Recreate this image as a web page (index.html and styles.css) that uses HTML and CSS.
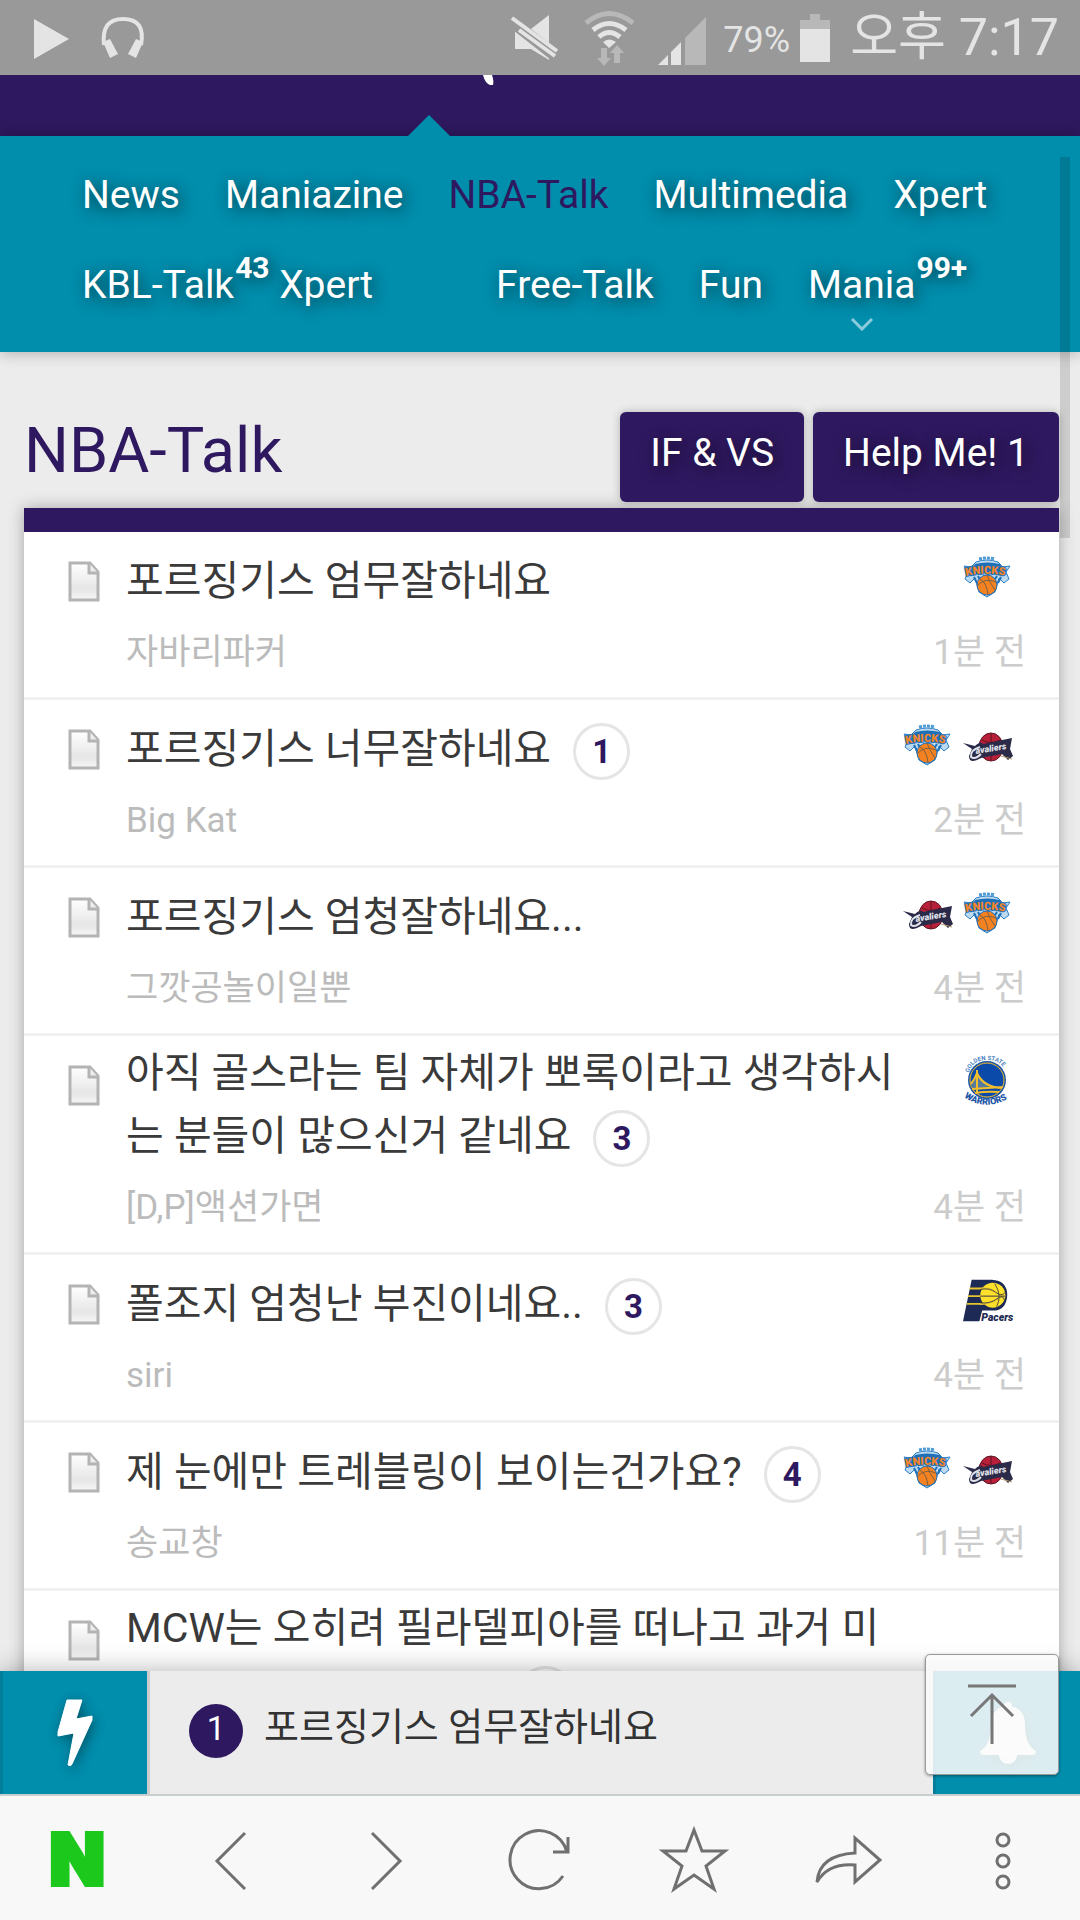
FILE: index.html
```html
<!DOCTYPE html>
<html lang="ko">

<head>
    <meta charset="UTF-8">
    <meta name="viewport" content="width=device-width, initial-scale=1.0">
    <title>NBA-Talk</title>
    <link rel="stylesheet" href="styles.css">
</head>

<body>
    <!-- shared icons -->
    <svg class="sprite" aria-hidden="true">
        <defs>
            <linearGradient id="paper" x1="0" y1="0" x2="0" y2="1">
                <stop offset="0" stop-color="#fff"/>
                <stop offset="0.7" stop-color="#e6e6e6"/>
                <stop offset="1" stop-color="#f6f6f6"/>
            </linearGradient>
            <path id="arc-top" d="M6 17 Q9 4 24 4 Q39 4 43 17"/>
            <path id="arc-bottom" d="M1 41 Q24 57 49 40"/>
            <path id="arc-knicks" d="M3 24 Q24 19 49 25"/>
        </defs>
        <symbol id="doc" viewBox="0 0 32 41">
            <path d="M2 2 H22 L30 11 V39 H2 Z" fill="url(#paper)" stroke="#b4b4b4" stroke-width="3"/>
            <path d="M21 2 V12 H30" fill="#eee" stroke="#b4b4b4" stroke-width="3"/>
        </symbol>
        <symbol id="knicks" viewBox="0 0 50 50">
            <path d="M1 14 L8 15 L13 10 Q24 6 35 10 L40 15 L47 14 L43 20 L46 27 L41 31 L36 26 L32 40 L24 45 L16 40 L12 26 L7 31 L2 27 L5 20 Z" fill="#bcd9ef" stroke="#2d7fc4" stroke-width="1"/>
            <path d="M16 7 Q24 5 32 7" fill="none" stroke="#4c9ad6" stroke-width="3" stroke-dasharray="3 1"/>
            <path d="M12 12 Q24 9 37 12 L43 23 Q24 18 5 24 Z" fill="#1d6fb8"/>
            <path d="M11 25 L14 31 M15 24 L18 30 M38 25 L35 31 M34 24 L30 30" stroke="#1d6fb8" stroke-width="2"/>
            <circle cx="24" cy="33" r="10" fill="#f58220" stroke="#1d6fb8" stroke-width="1"/>
            <path d="M17 27 Q24 31 25 43 M24 23 Q27 31 32 38 M14 34 Q22 25 33 30" fill="none" stroke="#7d6040" stroke-width="1"/>
        </symbol>
        <symbol id="cavs" viewBox="0 0 50 50">
            <ellipse cx="28" cy="27" rx="12" ry="14" fill="#b81f38" stroke="#5b1522" stroke-width="1"/>
            <path d="M28 13 V40 M19 20 Q28 25 37 20" fill="none" stroke="#5b1522" stroke-width="1"/>
            <path d="M0 23 L12 26 Q18 20 20 24 L49 18 L47 29 L50 36 L45 40 L39 34 L18 38 Q6 45 6 36 L9 29 Z" fill="#2b2a48"/>
            <path d="M17 27 Q7 30 8 37 Q12 40 18 34" fill="none" stroke="#e1e3ea" stroke-width="2"/>
            <path d="M38 36 L49 39" stroke="#b59a6a" stroke-width="1"/>
        </symbol>
    </svg>

    <div class="status-bar">
        <svg class="status-media" width="112" height="44" viewBox="0 0 112 44" fill="#e4e4e4">
            <path d="M0 3 L35 23 L0 43 Z"/>
            <path d="M70 29 Q67 3 89 3 Q112 3 107 29" fill="none" stroke="#e4e4e4" stroke-width="4"/>
            <path d="M69 26 L76 23 L84 38 L76 42 Z M109 26 L102 23 L94 38 L102 42 Z"/>
        </svg>
        <svg width="200" height="56" viewBox="0 0 200 56" fill="#e4e4e4">
            <path d="M4 22 H16 L38 5 V50 L20 39 H4 Z"/>
            <path d="M0 11 L46 47" stroke="#999" stroke-width="12"/>
            <path d="M1 8 L46 41 M8 20 L44 46" stroke="#e4e4e4" stroke-width="4"/>
            <g fill="none" stroke="#e4e4e4" stroke-width="5">
                <path d="M75 13 Q98 -6 122 13" stroke="#b8b8b8"/>
                <path d="M82 20 Q98 7 115 20"/>
                <path d="M88 27 Q98 18 109 27"/>
            </g>
            <path d="M92 32 Q98 27 105 32 L98 38 Z"/>
            <path d="M90 38 H96 V48 H100 L93 56 L86 48 H90 Z M103 53 V43 H99 L106 35 L113 43 H109 V53 Z" fill="#b8b8b8"/>
            <path d="M147 55 L157 45 V55 Z M160 55 V42 L170 32 V55 Z"/>
            <path d="M174 55 V28 L195 7 V55 Z" fill="#b8b8b8"/>
        </svg>
        <span class="battery-level">79%</span>
        <svg width="30" height="50" viewBox="0 0 30 50">
            <path d="M10 1 H20 V7 H30 V16 H0 V7 H10 Z" fill="#b8b8b8"/>
            <rect y="16" width="30" height="33" fill="#e4e4e4"/>
        </svg>
        <span class="clock">오후 7:17</span>
    </div>

    <main>
        <header class="brand">
            <svg width="14" height="12" viewBox="0 0 14 12"><path d="M2 0 H11 Q13 6 12 10 H9 Q4 8 2 0" fill="#fff"/></svg>
        </header>

        <nav class="menu">
            <div class="menu-row">
                <a href="#">News</a>
                <a href="#">Maniazine</a>
                <a href="#" class="active">NBA-Talk</a>
                <a href="#">Multimedia</a>
                <a href="#">Xpert</a>
            </div>
            <div class="menu-row">
                <a href="#">KBL-Talk<b class="count">43</b></a>
                <a href="#">Xpert</a>
                <a href="#" class="group-start">Free-Talk</a>
                <a href="#">Fun</a>
                <a href="#">Mania<b class="count">99+</b>
                    <svg class="more" width="24" height="14" viewBox="0 0 24 14"><path d="M2 2 L12 12 L22 2" fill="none" stroke="#8ccbdc" stroke-width="3"/></svg>
                </a>
            </div>
        </nav>

        <section class="board">
            <div class="board-head">
                <h1>NBA-Talk</h1>
                <button type="button">IF &amp; VS</button>
                <button type="button">Help Me! 1</button>
            </div>

            <ul class="topics">
                <li>
                    <svg class="doc"><use href="#doc"/></svg>
                    <div class="topic">
                        <a href="#">포르징기스 엄무잘하네요</a>
                        <p>자바리파커</p>
                    </div>
                    <div class="side">
                        <div class="teams">
                            <svg viewBox="0 0 50 50"><use href="#knicks"/><text class="logo-knicks"><textPath href="#arc-knicks">KNICKS</textPath></text></svg>
                        </div>
                        <time>1분 전</time>
                    </div>
                </li>
                <li>
                    <svg class="doc"><use href="#doc"/></svg>
                    <div class="topic">
                        <a href="#">포르징기스 너무잘하네요<span class="replies">1</span></a>
                        <p>Big Kat</p>
                    </div>
                    <div class="side">
                        <div class="teams">
                            <svg viewBox="0 0 50 50"><use href="#knicks"/><text class="logo-knicks"><textPath href="#arc-knicks">KNICKS</textPath></text></svg>
                            <svg viewBox="0 0 50 50"><use href="#cavs"/><text x="13" y="34" transform="rotate(-9 13 34)" class="logo-cavs">avaliers</text></svg>
                        </div>
                        <time>2분 전</time>
                    </div>
                </li>
                <li>
                    <svg class="doc"><use href="#doc"/></svg>
                    <div class="topic">
                        <a href="#">포르징기스 엄청잘하네요...</a>
                        <p>그깟공놀이일뿐</p>
                    </div>
                    <div class="side">
                        <div class="teams">
                            <svg viewBox="0 0 50 50"><use href="#cavs"/><text x="13" y="34" transform="rotate(-9 13 34)" class="logo-cavs">avaliers</text></svg>
                            <svg viewBox="0 0 50 50"><use href="#knicks"/><text class="logo-knicks"><textPath href="#arc-knicks">KNICKS</textPath></text></svg>
                        </div>
                        <time>4분 전</time>
                    </div>
                </li>
                <li class="long">
                    <svg class="doc"><use href="#doc"/></svg>
                    <div class="topic">
                        <a href="#">아직 골스라는 팀 자체가 뽀록이라고 생각하시는 분들이 많으신거 같네요<span class="replies">3</span></a>
                        <p>[D,P]액션가면</p>
                    </div>
                    <div class="side">
                        <div class="teams">
                            <svg viewBox="0 0 50 50">
                                <circle cx="24" cy="24" r="19" fill="#1d55a6"/>
                                <circle cx="24" cy="24" r="17" fill="#0b4aa8" stroke="#f4bd2c" stroke-width="1"/>
                                <path d="M14 16 Q20 30 40 32 H9 V27 Z" fill="#547a9e"/>
                                <path d="M14 14 V38 M9 33 L40 31 M14 17 Q20 31 39 32 M14 17 Q12 23 8 28 M12 37 Q24 35 36 36" fill="none" stroke="#f4bd2c" stroke-width="2"/>
                                <text class="logo-state"><textPath href="#arc-top">GOLDEN STATE</textPath></text>
                                <path d="M4 37 Q24 50 45 37 L46 43 Q24 58 3 43 Z" fill="#fff"/>
                                <text class="logo-warriors"><textPath href="#arc-bottom">WARRIORS</textPath></text>
                            </svg>
                        </div>
                        <time>4분 전</time>
                    </div>
                </li>
                <li>
                    <svg class="doc"><use href="#doc"/></svg>
                    <div class="topic">
                        <a href="#">폴조지 엄청난 부진이네요..<span class="replies">3</span></a>
                        <p>siri</p>
                    </div>
                    <div class="side">
                        <div class="teams">
                            <svg viewBox="0 0 52 50">
                                <path d="M9 4 H30 Q46 5 46 20 Q45 36 31 36 H20 L17 47 H0 Z" fill="#1d2a55"/>
                                <circle cx="31" cy="20" r="13" fill="#ffe02b"/>
                                <path d="M7 13 H18 Q28 12 33 17 M5 21 H44 M4 29 H16 Q27 30 36 24" fill="none" stroke="#e5c52c" stroke-width="2"/>
                                <path d="M18 14 Q28 12 34 17 T44 17 M18 21 H44 M18 28 Q28 29 35 24 T43 25 M33 8 Q41 20 35 32" fill="none" stroke="#4a4a3a" stroke-width="1"/>
                                <text x="19" y="47" class="logo-pacers">Pacers</text>
                            </svg>
                        </div>
                        <time>4분 전</time>
                    </div>
                </li>
                <li>
                    <svg class="doc"><use href="#doc"/></svg>
                    <div class="topic">
                        <a href="#">제 눈에만 트레블링이 보이는건가요?<span class="replies">4</span></a>
                        <p>송교창</p>
                    </div>
                    <div class="side">
                        <div class="teams">
                            <svg viewBox="0 0 50 50"><use href="#knicks"/><text class="logo-knicks"><textPath href="#arc-knicks">KNICKS</textPath></text></svg>
                            <svg viewBox="0 0 50 50"><use href="#cavs"/><text x="13" y="34" transform="rotate(-9 13 34)" class="logo-cavs">avaliers</text></svg>
                        </div>
                        <time>11분 전</time>
                    </div>
                </li>
                <li class="long">
                    <svg class="doc"><use href="#doc"/></svg>
                    <div class="topic">
                        <a href="#">MCW는 오히려 필라델피아를 떠나고 과거 미<span class="replies"></span></a>
                    </div>
                    <div class="side"></div>
                </li>
            </ul>
        </section>
        <div class="scroll-thumb"></div>
    </main>

    <div class="quick-bar">
        <button type="button" class="quick" aria-label="quick">
            <svg width="36" height="68" viewBox="0 0 36 68"><path d="M10 1 H25 L19 20 L35 17 V21 L15 65 Q14 68 11 66 L17 34 L1 37 V33 Z" fill="#fff" stroke="#fff" stroke-width="1" stroke-linejoin="round"/></svg>
        </button>
        <a href="#" class="ticker"><span class="rank">1</span>포르징기스 엄무잘하네요</a>
        <button type="button" class="alarm" aria-label="alarm">
            <svg width="58" height="64" viewBox="0 0 58 64" fill="#fff">
                <circle cx="29" cy="5" r="4"/>
                <path d="M29 5 Q46 6 46 24 Q46 44 57 50 Q57 54 53 54 H5 Q1 54 1 50 Q12 44 12 24 Q12 6 29 5"/>
                <path d="M20 54 A9 9 0 0 0 38 54 Z"/>
                <path d="M24 54 Q24 59 29 60" fill="none" stroke="#cdd" stroke-width="1"/>
            </svg>
        </button>
        <button type="button" class="to-top" aria-label="top">
            <svg width="52" height="64" viewBox="0 0 52 64" fill="none" stroke="#777" stroke-width="3">
                <path d="M2 3 H50 M26 12 V61 M5 33 L26 12 L47 33"/>
            </svg>
        </button>
    </div>

    <footer class="toolbar">
        <button type="button" class="home">N</button>
        <button type="button" aria-label="back"><svg viewBox="0 0 70 70"><path d="M49 7 L21 35 L49 63"/></svg></button>
        <button type="button" aria-label="forward"><svg viewBox="0 0 70 70"><path d="M21 7 L49 35 L21 63"/></svg></button>
        <button type="button" aria-label="reload"><svg viewBox="0 0 70 70"><path d="M58 50 A29 29 0 1 1 62 26 M63 11 V26 H48"/></svg></button>
        <button type="button" aria-label="bookmark"><svg viewBox="0 0 70 70"><path d="M35 4 L43 25 H66 L47 40 L55 63 L35 49 L15 63 L23 40 L4 25 H27 Z"/></svg></button>
        <button type="button" aria-label="share"><svg viewBox="0 0 70 70"><path d="M3 56 Q5 29 41 27 V12 L66 34 L41 56 V39 Q14 37 3 56 Z"/></svg></button>
        <button type="button" aria-label="menu"><svg viewBox="0 0 70 70"><circle cx="35" cy="14" r="6"/><circle cx="35" cy="35" r="6"/><circle cx="35" cy="56" r="6"/></svg></button>
    </footer>
</body>

</html>
```
FILE: styles.css
```css
* {
    box-sizing: border-box;
}
body {
    display: flex;
    flex-direction: column;
    height: 100vh;
    margin: 0;
    background-color: #ececec;
    font-family: Roboto, "Noto Sans CJK KR", sans-serif;
    overflow: hidden;
}
a {
    color: inherit;
    text-decoration: none;
}
button {
    border: 0;
    padding: 0;
    font-family: inherit;
}
svg {
    display: block;
    flex: none;
}
.sprite {
    position: absolute;
    width: 0;
    height: 0;
}

/* phone status bar */
.status-bar {
    display: flex;
    align-items: center;
    height: 75px;
    flex: none;
    padding: 0 21px 0 34px;
    background-color: #999;
    color: #e4e4e4;
}
.status-media {
    margin-right: auto;
}
.battery-level {
    margin: 4px 10px 0 12px;
    font-size: 36px;
}
.clock {
    margin-left: 20px;
    font-size: 52px;
    line-height: 75px;
}

main {
    position: relative;
    flex: 1;
    min-height: 0;
    overflow: hidden;
}
.brand {
    height: 61px;
    padding-left: 481px;
    background-color: #2e185f;
}

/* menu */
.menu {
    position: relative;
    padding: 29px 82px 37px;
    background-color: #018dac;
    box-shadow: 0 0 15px rgba(0, 0, 0, 0.3);
    color: #fff;
    font-size: 39px;
    line-height: 60px;
    text-shadow: 3px 3px 15px rgba(0, 0, 0, 0.6);
}
.menu::before {
    content: "";
    position: absolute;
    top: -21px;
    left: 408px;
    border: 21px solid transparent;
    border-top: 0;
    border-bottom-color: #018dac;
}
.menu-row {
    display: flex;
    gap: 45px;
}
.menu-row + .menu-row {
    margin-top: 30px;
}
.menu a {
    position: relative;
}
.menu .active {
    color: #2e185f;
    text-shadow: none;
}
.menu .group-start {
    margin-left: 78px;
}
.count {
    position: absolute;
    top: -5px;
    left: 100%;
    padding-left: 1px;
    font-size: 30px;
    line-height: 36px;
}
.more {
    position: absolute;
    top: 62px;
    left: 42px;
}

/* board */
.board {
    padding: 60px 21px 0 24px;
}
.board-head {
    display: flex;
    gap: 9px;
    padding-bottom: 6px;
}
.board-head h1 {
    flex: 1;
    margin: 0;
    color: #2e185f;
    font-size: 63px;
    font-weight: 400;
    line-height: 78px;
}
.board-head button {
    padding: 0 30px 8px;
    height: 90px;
    border-radius: 6px;
    background-color: #2e185f;
    box-shadow: 0 0 9px rgba(0, 0, 0, 0.25);
    color: #fff;
    font-size: 39px;
    text-shadow: 3px 3px 15px rgba(0, 0, 0, 0.6);
}
.topics {
    margin: 0;
    padding: 0;
    border-top: 24px solid #2e185f;
    background-color: #fff;
    box-shadow: 0 0 15px rgba(0, 0, 0, 0.3);
    list-style: none;
}
.topics li {
    display: flex;
    padding: 0 33px 19px 44px;
    border-bottom: 3px solid #f1f1f1;
}
.doc {
    width: 32px;
    height: 41px;
    margin: 29px 26px 0 0;
}
.topic {
    flex: 1;
    padding-top: 18px;
}
.long .topic {
    padding-top: 6px;
}
.topic a {
    display: block;
    color: #3a3a3a;
    font-size: 41px;
    line-height: 63px;
    word-break: break-all;
}
.topic p {
    margin: 14px 0 0;
    color: #bbb;
    font-size: 35px;
    line-height: 51px;
}
.replies {
    display: inline-block;
    width: 57px;
    height: 57px;
    margin-left: 22px;
    border: 3px solid #e5e5e5;
    border-radius: 50%;
    color: #2e185f;
    font-size: 33px;
    font-weight: 700;
    line-height: 51px;
    text-align: center;
}
.replies:empty {
    display: block;
    margin: 6px 0 0 391px;
}
.side {
    display: flex;
    flex-direction: column;
    justify-content: space-between;
    flex: 0 0 124px;
    padding-top: 20px;
}
.teams {
    display: flex;
    justify-content: flex-end;
    gap: 10px;
    padding-right: 13px;
}
.teams svg {
    width: 50px;
    height: 50px;
    overflow: visible;
}
.side time {
    color: #ccc;
    font-size: 35px;
    line-height: 51px;
    text-align: right;
}

/* team wordmarks */
.logo-knicks {
    fill: #f58426;
    font-size: 11px;
    font-weight: 900;
    stroke: #1d6fb8;
    stroke-width: 2;
    paint-order: stroke;
}
.logo-cavs {
    fill: #e1e3ea;
    font-size: 9px;
    font-style: italic;
    font-weight: 900;
}
.logo-state {
    fill: #4a7fc0;
    font-size: 6px;
    font-weight: 700;
}
.logo-warriors {
    fill: #1d55a6;
    font-size: 9px;
    font-weight: 900;
}
.logo-pacers {
    fill: #1d2a55;
    font-size: 11px;
    font-style: italic;
    font-weight: 900;
}
.scroll-thumb {
    position: absolute;
    top: 82px;
    right: 10px;
    width: 10px;
    height: 381px;
    background-color: rgba(0, 0, 0, 0.13);
}

/* bar with the latest topic */
.quick-bar {
    position: relative;
    display: flex;
    flex: none;
    height: 123px;
    background-color: #ececec;
    box-shadow: 0 0 24px rgba(0, 0, 0, 0.3);
}
.quick,
.alarm {
    display: flex;
    align-items: center;
    justify-content: center;
    width: 147px;
    border-left: 3px solid #007e9a;
    background-color: #018dac;
}
.quick svg,
.alarm svg {
    filter: drop-shadow(2px 3px 6px rgba(0, 0, 0, 0.4));
}
.ticker {
    flex: 1;
    padding-left: 39px;
    border-left: 3px solid #ccc;
    color: #333;
    font-size: 38px;
    line-height: 113px;
}
.rank {
    display: inline-block;
    width: 54px;
    height: 54px;
    margin-right: 21px;
    border-radius: 50%;
    background-color: #2e185f;
    color: #fff;
    font-size: 33px;
    line-height: 50px;
    text-align: center;
}
.to-top {
    position: absolute;
    top: -17px;
    right: 21px;
    display: flex;
    align-items: center;
    justify-content: center;
    width: 134px;
    height: 121px;
    border: 1px solid #999;
    border-radius: 5px;
    background-color: rgba(250, 250, 250, 0.88);
    box-shadow: 0 1px 3px rgba(0, 0, 0, 0.4);
}

/* browser toolbar */
.toolbar {
    position: relative;
    display: flex;
    flex: none;
    height: 126px;
    border-top: 2px solid #c8cfcf;
    background-color: #f8f8f8;
}
.toolbar button {
    display: flex;
    align-items: center;
    justify-content: center;
    flex: 1;
    padding-top: 6px;
    background: none;
}
.toolbar svg {
    width: 70px;
    height: 70px;
    fill: none;
    stroke: #707070;
    stroke-width: 3;
}
.toolbar .home {
    padding-top: 0;
    color: #1dc81d;
    font-family: Inter, sans-serif;
    font-size: 72px;
    font-weight: 900;
    -webkit-text-stroke: 4px #1dc81d;
}
```
